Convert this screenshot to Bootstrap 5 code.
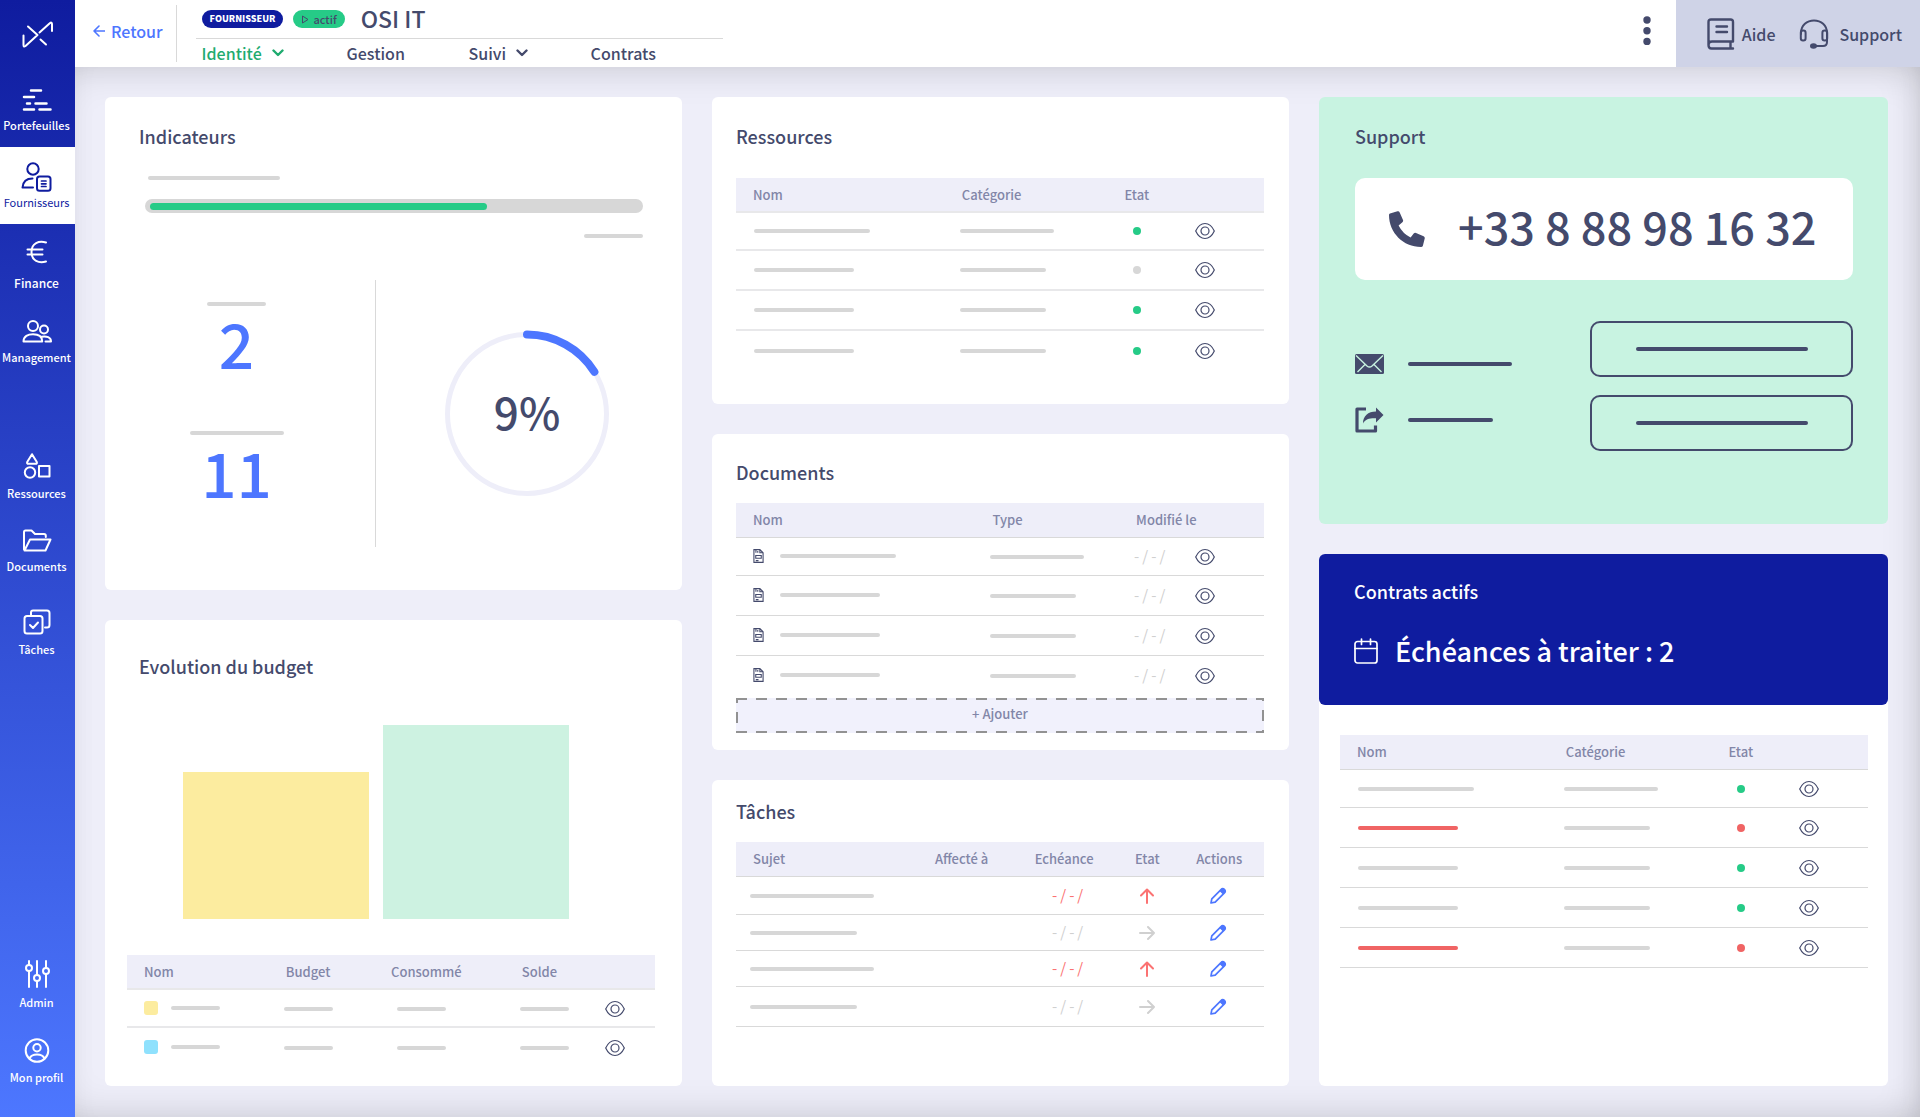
<!DOCTYPE html>
<html lang="fr">
<head>
<meta charset="utf-8">
<meta name="viewport" content="width=device-width, initial-scale=1">
<title>OSI IT – Fournisseur</title>
<link href="https://cdn.jsdelivr.net/npm/bootstrap@5.3.0/dist/css/bootstrap.min.css" rel="stylesheet">
<style>
:root{--ink:#444a6c;--muted-ink:#8286a8;--navy:#0f1c9f;--blue:#4d76ff;--ok:#26cb87;--alert:#f06464;--soft:#eeeef9;--line:#d9d9d9}
body{font-family:"Noto Sans CJK JP","Noto Sans CJK SC","Noto Sans",sans-serif;font-weight:500;color:var(--ink);background:var(--soft)}
a{text-decoration:none;color:inherit}
svg{display:block;flex:none}
.ico{fill:none;stroke:currentColor;stroke-width:2;stroke-linecap:round;stroke-linejoin:round}

/* side navigation */
.side-nav{width:75px;background:linear-gradient(#0f1c9f,#4d77ff);color:#fff;flex:none;padding-bottom:17px}
.brand{height:70px}
.side-link{height:77px;gap:6px;font-size:11px;line-height:16px;padding-right:2px}
.side-link.current{background:#fff;color:var(--navy);gap:2px;font-weight:400}
.side-link.airy{gap:11px;font-size:12px}
.side-group{margin-top:3px}
.side-group-2{margin-top:57px}

/* top bar */
.top-bar{min-height:67px;background:#fff}
.back-link{color:var(--blue);font-size:16px;line-height:24px;padding:0 13px 5px 18px;gap:6px}
.rule-v{width:1px;background:var(--line);margin:5px 0}
.head-block{width:527px;margin-left:19px}
.head-title{padding:0 6px;height:39px;gap:10px;border-bottom:1px solid var(--line)}
.head-title h1{font-size:23px;line-height:34px;margin:0 0 2px 6px;font-weight:500}
.pill{height:18px;border-radius:9px;font-size:9px;line-height:18px;padding:0 8px}
.pill-navy{background:var(--navy);color:#fff;font-weight:900}
.pill-ok{background:var(--ok);font-size:11px;gap:4px}
.tabs{height:28px;padding:0 6px;font-size:16px;line-height:28px}
.tabs a{gap:10px;width:122px}
.tabs a:first-child{width:145px;color:#1fab6f}
.kebab{border:0;background:none;color:var(--ink);padding:0 25px 5px}
.help-zone{background:#cfd3e7;padding:0 18px 0 31px;gap:24px;font-size:16px}
.help-zone a:first-child{gap:7px}
.help-zone a:last-child{gap:10px}

/* board */
.board{padding:30px 32px 31px 30px;gap:30px;box-shadow:inset 0 20px 40px -20px rgba(0,0,0,.14),inset -20px 0 40px -20px rgba(0,0,0,.14),inset 0 -20px 40px -20px rgba(0,0,0,.14)}
.board-col{flex:577 1 0;gap:30px;min-width:0}
.board-col:last-child{flex-grow:569}
.panel{background:#fff;border-radius:6px;padding:26px 25px 33px 24px}
.panel-title{font-size:18px;line-height:26px;font-weight:500;margin:0 0 29px}
.panel.dense{padding-top:25px;padding-bottom:17px}
.panel.dense .panel-title{margin-bottom:18px}
.panel.tasks{padding-top:18px}

/* placeholder lines */
.skel{display:inline-block;height:4px;border-radius:2px;background:#d7d7d7;vertical-align:middle}
.skel-alert{background:var(--alert)}
.skel-ink{background:var(--ink)}
.s-50{width:49px}.s-60{width:59px}.s-85{width:85px}.s-86{width:86px}.s-93{width:94px}.s-100{width:100px}.s-104{width:104px}.s-107{width:107px}.s-116{width:116px}.s-124{width:124px}.s-132{width:132px}.s-172{width:172px}

/* data tables */
.grid-table{width:100%;table-layout:fixed;border-collapse:separate;border-spacing:0;font-size:13px;line-height:18px}
.grid-table th{height:35px;padding:0 0 0 2px;background:var(--soft);color:var(--muted-ink);font-weight:500;border-bottom:1px solid var(--line);white-space:nowrap}
.grid-table td{height:40px;padding:0 0 2px;border-bottom:1px solid var(--line)}
.grid-table tbody tr:first-child td{height:38px}
.grid-table th:first-child{padding-left:17px}
.grid-table td:first-child{padding-left:18px}
.grid-table th.mid{text-align:center;padding:0}
.grid-table td.mid{text-align:center}
.grid-table.open tbody tr:last-child td{border-bottom:0}
.grid-table.soft-lines th,.grid-table.soft-lines td{border-bottom-width:2px;border-color:#e8e8ea}
.grid-table .see{padding-right:23px;text-align:center}
.see a,.see svg,.mid a,.mid svg{display:inline-block;vertical-align:middle}
.dot{display:inline-block;width:8px;height:8px;border-radius:50%;background:var(--ok);vertical-align:middle}
.dot-off{background:#d7d7d7}.dot-alert{background:var(--alert)}
.date-off{color:#d0d0d0;font-weight:400;font-size:15px}
.date-late{color:#fb7272;font-weight:400;font-size:15px}
.grid-table .due-cell{padding-left:7px}
.grid-table.compact td{height:36px}
.grid-table.compact td:first-child{padding-left:14px}
.grid-table.compact tbody tr:last-child td{height:40px}
.grid-table.docs td:first-child{padding-left:17px}
.doc-cell{gap:16px}
.link-pen{color:var(--blue)}
.add-btn{display:block;width:100%;height:35px;margin-top:2px;border:0;padding:0 0 3px;font-size:13px;line-height:18px;font-weight:500;color:var(--muted-ink);
 background:repeating-linear-gradient(90deg,#929292 0 11px,transparent 11px 20px) 0 0/100% 2px no-repeat,repeating-linear-gradient(90deg,#929292 0 11px,transparent 11px 20px) 0 100%/100% 2px no-repeat,repeating-linear-gradient(#929292 0 5px,transparent 5px 14px,#929292 14px 25px,transparent 25px 34px) 0 0/2px 100% no-repeat,repeating-linear-gradient(#929292 0 3px,transparent 3px 12px,#929292 12px 23px,transparent 23px 32px) 100% 0/2px 100% no-repeat,#f1f1fc}

/* indicators */
.panel.wide-left{padding-left:34px;padding-right:39px;padding-bottom:43px}
.wide-left .panel-title{margin-bottom:27px}
.lead-line{padding-left:9px}
.gauge{height:14px;border-radius:7px;background:#d7d7d7;padding:4px 5px 3px;margin:19px 0 21px 6px}
.gauge .progress-bar{background:var(--ok);border-radius:4px}
.kpis{margin-top:42px;height:267px}
.kpi-left{width:237px;border-right:1px solid var(--line);padding:22px 41px 0 0}
.kpi-num{color:var(--blue);font-size:62px;line-height:72px;margin-bottom:53px}
.kpi-ring{padding-left:34px}
.ring text{font-size:44px;fill:var(--ink)}

/* budget */
.panel.budget{padding:33px 27px 19px 22px}
.budget .panel-title{padding-left:12px}
.chart{height:194px;gap:14px;margin:46px 86px 36px 56px}
.chart-bar{flex:1}
.swatch{width:14px;height:14px;border-radius:3px}
.swatch-cell{gap:13px}
.bar-yellow{background:#fcec9f}.bar-green{background:#cdf2e1}.bar-cyan{background:#8fe1fd}
.grid-table.budget-grid td{height:38px;padding-bottom:0}
.grid-table.budget-grid td:first-child{padding-left:17px}
.budget-grid th:nth-child(3){padding-left:0}
.budget-grid td:nth-child(3){padding-left:6px}

/* support */
.panel.support{background:#c8f3e1;padding:26px 35px 73px 36px}
.phone-box{background:#fff;border-radius:10px;min-height:102px;padding:0 34px;gap:33px;font-size:45px;line-height:60px;white-space:nowrap}
.phone-box span{padding-bottom:6px}
.support-row{margin-top:41px}
.contact-list{gap:26px;padding-top:28px}
.contact-list a{gap:24px;height:30px}
.outline-btn{display:flex;align-items:center;justify-content:center;width:263px;height:56px;border:2px solid var(--ink);border-radius:10px;background:none;padding:0}
.btn-stack{gap:18px}

/* contracts */
.panel.contracts{padding:0}
.contracts-head{background:var(--navy);color:#fff;border-radius:6px;padding:24px 35px 34px}
.contracts-head .panel-title{margin-bottom:27px}
.due{font-size:27px;line-height:40px;gap:17px}
.contracts-body{padding:30px 20px 30px 21px}
</style>
</head>
<body>
<svg width="0" height="0" class="position-absolute" aria-hidden="true">
 <symbol id="eye" viewBox="0 0 20 18"><path d="M.7 9C3 4 6.300 1.500 10 1.500S17 4 19.300 9C17 14 13.700 16.500 10 16.500S3 14 .7 9z" fill="none" stroke="currentColor" stroke-width="1.200"/><circle cx="10" cy="9" r="4" fill="none" stroke="currentColor" stroke-width="1.200"/></symbol>
 <symbol id="doc" viewBox="0 0 12 16"><path d="M1 1h6.500L11 4.500V15H1zM7.500 1v3.500H11M3.200 1v3.500M5.200 2.500v2M3 7.500h6v3H3zM3 13h3" fill="none" stroke="currentColor" stroke-width="1.200"/></symbol>
 <symbol id="pen" viewBox="0 0 18 18"><path d="M2 16l.8-4.200L12 2.600a2.300 2.300 0 0 1 3.400 3.300L6.200 15.200z" fill="none" stroke="currentColor" stroke-width="1.700" stroke-linejoin="round"/><path d="M10.500 4l2-2a2.300 2.300 0 0 1 3.500 3.500l-2 2z" fill="currentColor"/></symbol>
 <symbol id="up" viewBox="0 0 16 16"><path d="M8 15V1.500M2 7.500l6-6 6 6" fill="none" stroke="currentColor" stroke-width="2" stroke-linecap="round" stroke-linejoin="round"/></symbol>
 <symbol id="right" viewBox="0 0 16 16"><path d="M1 8h14M9 2l6 6-6 6" fill="none" stroke="currentColor" stroke-width="2" stroke-linecap="round" stroke-linejoin="round"/></symbol>
 <symbol id="chev" viewBox="0 0 12 8"><path d="M1.500 1.500L6 6l4.500-4.500" fill="none" stroke="currentColor" stroke-width="2.400" stroke-linecap="round" stroke-linejoin="round"/></symbol>
</svg>
<div class="d-flex min-vh-100">
 <nav class="side-nav d-flex flex-column" aria-label="Navigation principale">
  <a href="#" class="brand d-flex align-items-center justify-content-center" aria-label="Accueil"><svg width="34" height="30" viewBox="0 0 34 30" class="ico" stroke-width="2.600"><path d="M7 6.500l9.500 8.500L4.500 26q-2 1.500-2-1V15.500M18.500 12.500L28.500 3.500q2.500-2 2.500.5V11M19.500 19.500L25 24.500"/></svg></a>
  <a href="#" class="side-link pt-1 d-flex flex-column align-items-center justify-content-center"><svg width="30" height="22" viewBox="0 0 30 22" class="ico"><path stroke-width="2.500" d="M9 1.500h10M2 8h10M5 14.500h3M13.500 14.500h11M2 20.500h10M17.500 20.500h11"/></svg><span>Portefeuilles</span></a>
  <a href="#" aria-current="page" class="side-link current d-flex flex-column align-items-center justify-content-center"><svg width="31" height="30" viewBox="0 0 31 30" class="ico"><circle cx="12" cy="7" r="5.700"/><path d="M11.500 16.500C6 16.500 2 19.500 1.500 25.500H12"/><rect x="16" y="14.500" width="13.500" height="14.300" rx="2.500"/><path d="M20.500 19h4.500M20.500 21.800h4.500M20.500 24.500h4.500" stroke-width="1.700"/></svg><span>Fournisseurs</span></a>
  <div class="side-group">
   <a href="#" class="side-link airy d-flex flex-column align-items-center justify-content-center"><svg width="22" height="24" viewBox="0 0 22 24" class="ico"><path d="M20 2.500C13 .5 5.500 3 5.500 12S13 23.500 20 21.500M1.500 9.500h15M1.500 14.500h15"/></svg><span>Finance</span></a>
   <a href="#" class="side-link d-flex flex-column align-items-center justify-content-center"><svg width="30" height="23" viewBox="0 0 30 23" class="ico"><circle cx="11" cy="6" r="5"/><circle cx="22" cy="9.500" r="4"/><path d="M1.500 21.500C1.500 16 6 14.200 11 14.200s9.200 1.800 9.200 7.300zM19.500 16.800c5 -1 9.500.500 9.500 4.700h-5.500"/></svg><span>Management</span></a>
  </div>
  <div class="side-group-2">
   <a href="#" class="side-link d-flex flex-column align-items-center justify-content-center"><svg width="28" height="26" viewBox="0 0 28 26" class="ico"><path d="M9 1.200L13.800 9q.5 1.800-1.300 1.800h-7q-1.800 0-1.300-1.800z"/><circle cx="7" cy="19.500" r="5.200"/><path d="M16 13h10.500v10.500H16z"/></svg><span>Ressources</span></a>
   <a href="#" class="side-link pb-1 d-flex flex-column align-items-center justify-content-center"><svg width="30" height="23" viewBox="0 0 30 23" class="ico"><path d="M2 20.500V3q0-1.500 1.500-1.500h6L13 5h9q1.800 0 1.800 1.800V8M2.500 21.500L8 10.500h20.500L23.500 21.500z"/></svg><span>Documents</span></a>
   <a href="#" class="side-link pt-1 d-flex flex-column align-items-center justify-content-center"><svg width="28" height="26" viewBox="0 0 28 26" class="ico"><path d="M8 6V3.500q0-2 2-2h14q2.500 0 2.500 2.500v12q0 2.500-2.500 2.500h-2"/><rect x="1.500" y="7" width="18" height="17.500" rx="2.500"/><path d="M7 16l3 3 5-5.500"/></svg><span>Tâches</span></a>
  </div>
  <div class="mt-auto">
   <a href="#" class="side-link d-flex flex-column align-items-center justify-content-center"><svg width="28" height="28" viewBox="0 0 28 28" class="ico"><path d="M6 1v4M6 11v16M14 1v14M14 21v6M23 1v7M23 14v13"/><circle cx="6" cy="8" r="3"/><circle cx="14" cy="18" r="3"/><circle cx="23" cy="11" r="3"/></svg><span>Admin</span></a>
   <a href="#" class="side-link d-flex flex-column align-items-center justify-content-center"><svg width="26" height="25" viewBox="0 0 26 25" class="ico"><circle cx="13" cy="12.500" r="11.300"/><circle cx="13" cy="9.800" r="3.700"/><path d="M5.500 20.500C7 17 10 16.500 13 16.500s6 .5 7.500 4"/></svg><span>Mon profil</span></a>
  </div>
 </nav>

 <div class="flex-grow-1 d-flex flex-column">
  <header class="top-bar d-flex">
   <a href="#" class="back-link d-flex align-items-center"><svg width="12" height="12" viewBox="0 0 12 12" class="ico"><path stroke-width="1.600" d="M11.500 6H1M6 1L1 6l5 5"/></svg><span>Retour</span></a>
   <div class="rule-v"></div>
   <div class="head-block">
    <div class="head-title d-flex align-items-center">
     <span class="pill pill-navy">FOURNISSEUR</span>
     <span class="pill pill-ok d-flex align-items-center"><svg width="8" height="9" viewBox="0 0 8 9" fill="none" stroke="currentColor"><path d="M1.500 1l5.500 3.500L1.500 8z"/></svg>actif</span>
     <h1>OSI IT</h1>
    </div>
    <nav class="tabs d-flex" aria-label="Sections">
     <a href="#" class="d-flex align-items-center">Identité<svg width="12" height="8"><use href="#chev"/></svg></a>
     <a href="#">Gestion</a>
     <a href="#" class="d-flex align-items-center">Suivi<svg width="12" height="8"><use href="#chev"/></svg></a>
     <a href="#">Contrats</a>
    </nav>
   </div>
   <button class="kebab ms-auto" type="button" aria-label="Plus d'actions"><svg width="8" height="30" viewBox="0 0 8 30" fill="currentColor"><circle cx="4" cy="4" r="3.700"/><circle cx="4" cy="14.700" r="3.700"/><circle cx="4" cy="25.400" r="3.700"/></svg></button>
   <div class="help-zone d-flex align-items-center">
    <a href="#" class="d-flex align-items-center"><svg width="28" height="32" viewBox="0 0 28 32" class="ico"><path stroke-width="2.400" d="M26 23.500V4q0-2.500-2.500-2.500H4Q1.500 1.500 1.500 4v23q0 3.500 3 3.500H26M26 23.500H5q-3.500 0-3.500 3.500M23.500 23.500v7M9.500 8.500H20M9.500 14H20"/></svg>Aide</a>
    <a href="#" class="d-flex align-items-center"><svg width="30" height="30" viewBox="0 0 30 30" class="ico"><path d="M2 15v-1C2 6 8 1.500 15 1.500S28 6 28 14v9q0 4-4 4h-9"/><rect x="1.800" y="11.500" width="4.800" height="10" rx="2.200"/><rect x="23.400" y="11.500" width="4.800" height="10" rx="2.200"/><ellipse cx="14.500" cy="27" rx="2.500" ry="1.800" fill="currentColor"/></svg>Support</a>
   </div>
  </header>

  <main class="board d-flex flex-grow-1">
   <div class="board-col d-flex flex-column">
    <section class="panel wide-left">
     <h2 class="panel-title">Indicateurs</h2>
     <div class="lead-line d-flex"><span class="skel s-132"></span></div>
     <div class="gauge progress" role="progressbar" aria-label="Avancement" aria-valuenow="69" aria-valuemin="0" aria-valuemax="100"><div class="progress-bar" style="width:69%"></div></div>
     <div class="d-flex justify-content-end"><span class="skel s-60"></span></div>
     <div class="kpis d-flex">
      <div class="kpi-left d-flex flex-column align-items-center">
       <span class="skel s-60"></span><div class="kpi-num">2</div>
       <span class="skel s-93"></span><div class="kpi-num mb-0">11</div>
      </div>
      <div class="kpi-ring flex-grow-1 d-flex align-items-center justify-content-center">
       <svg class="ring" width="168" height="168" viewBox="0 0 168 168" role="img" aria-label="9 %"><circle cx="84" cy="84" r="79.500" fill="none" stroke="#eeeef9" stroke-width="5"/><path d="M84 4.500A79.500 79.500 0 0 1 151.400 41.800" fill="none" stroke="#4d76ff" stroke-width="8" stroke-linecap="round"/><text x="84" y="100" text-anchor="middle">9%</text></svg>
      </div>
     </div>
    </section>
    <section class="panel budget flex-grow-1">
     <h2 class="panel-title">Evolution du budget</h2>
     <div class="chart d-flex align-items-end">
      <div class="chart-bar bar-yellow" style="height:76%"></div>
      <div class="chart-bar bar-green" style="height:100%"></div>
     </div>
     <table class="grid-table soft-lines open budget-grid">
      <colgroup><col style="width:29.700%"><col style="width:20.300%"><col style="width:24.400%"><col><col style="width:15%"></colgroup>
      <thead><tr><th>Nom</th><th>Budget</th><th>Consommé</th><th>Solde</th><th></th></tr></thead>
      <tbody>
       <tr><td><div class="swatch-cell d-flex align-items-center"><span class="swatch bar-yellow"></span><span class="skel s-50"></span></div></td><td><span class="skel s-50"></span></td><td><span class="skel s-50"></span></td><td><span class="skel s-50"></span></td><td class="mid"><a href="#" aria-label="Voir"><svg width="20" height="18"><use href="#eye"/></svg></a></td></tr>
       <tr><td><div class="swatch-cell d-flex align-items-center"><span class="swatch bar-cyan"></span><span class="skel s-50"></span></div></td><td><span class="skel s-50"></span></td><td><span class="skel s-50"></span></td><td><span class="skel s-50"></span></td><td class="mid"><a href="#" aria-label="Voir"><svg width="20" height="18"><use href="#eye"/></svg></a></td></tr>
      </tbody>
     </table>
    </section>
   </div>

   <div class="board-col d-flex flex-column">
    <section class="panel">
     <h2 class="panel-title">Ressources</h2>
     <table class="grid-table soft-lines open">
      <colgroup><col style="width:42.400%"><col style="width:27.500%"><col style="width:12%"><col></colgroup>
      <thead><tr><th>Nom</th><th>Catégorie</th><th class="mid">Etat</th><th></th></tr></thead>
      <tbody>
       <tr><td><span class="skel s-116"></span></td><td><span class="skel s-93"></span></td><td class="mid"><span class="dot"></span></td><td class="see"><a href="#" aria-label="Voir"><svg width="20" height="18"><use href="#eye"/></svg></a></td></tr>
       <tr><td><span class="skel s-100"></span></td><td><span class="skel s-86"></span></td><td class="mid"><span class="dot dot-off"></span></td><td class="see"><a href="#" aria-label="Voir"><svg width="20" height="18"><use href="#eye"/></svg></a></td></tr>
       <tr><td><span class="skel s-100"></span></td><td><span class="skel s-86"></span></td><td class="mid"><span class="dot"></span></td><td class="see"><a href="#" aria-label="Voir"><svg width="20" height="18"><use href="#eye"/></svg></a></td></tr>
       <tr><td><span class="skel s-100"></span></td><td><span class="skel s-86"></span></td><td class="mid"><span class="dot"></span></td><td class="see"><a href="#" aria-label="Voir"><svg width="20" height="18"><use href="#eye"/></svg></a></td></tr>
      </tbody>
     </table>
    </section>
    <section class="panel dense">
     <h2 class="panel-title">Documents</h2>
     <table class="grid-table open docs">
      <colgroup><col style="width:48.200%"><col style="width:27.200%"><col style="width:6.500%"><col></colgroup>
      <thead><tr><th>Nom</th><th>Type</th><th colspan="2">Modifié le</th></tr></thead>
      <tbody>
       <tr><td><div class="doc-cell d-flex align-items-center"><svg width="11" height="16"><use href="#doc"/></svg><span class="skel s-116"></span></div></td><td><span class="skel s-93"></span></td><td class="date-off">-&thinsp;/&thinsp;-&thinsp;/</td><td class="see"><a href="#" aria-label="Voir"><svg width="20" height="18"><use href="#eye"/></svg></a></td></tr>
       <tr><td><div class="doc-cell d-flex align-items-center"><svg width="11" height="16"><use href="#doc"/></svg><span class="skel s-100"></span></div></td><td><span class="skel s-86"></span></td><td class="date-off">-&thinsp;/&thinsp;-&thinsp;/</td><td class="see"><a href="#" aria-label="Voir"><svg width="20" height="18"><use href="#eye"/></svg></a></td></tr>
       <tr><td><div class="doc-cell d-flex align-items-center"><svg width="11" height="16"><use href="#doc"/></svg><span class="skel s-100"></span></div></td><td><span class="skel s-86"></span></td><td class="date-off">-&thinsp;/&thinsp;-&thinsp;/</td><td class="see"><a href="#" aria-label="Voir"><svg width="20" height="18"><use href="#eye"/></svg></a></td></tr>
       <tr><td><div class="doc-cell d-flex align-items-center"><svg width="11" height="16"><use href="#doc"/></svg><span class="skel s-100"></span></div></td><td><span class="skel s-86"></span></td><td class="date-off">-&thinsp;/&thinsp;-&thinsp;/</td><td class="see"><a href="#" aria-label="Voir"><svg width="20" height="18"><use href="#eye"/></svg></a></td></tr>
      </tbody>
     </table>
     <button type="button" class="add-btn">+ Ajouter</button>
    </section>
    <section class="panel dense tasks flex-grow-1">
     <h2 class="panel-title">Tâches</h2>
     <table class="grid-table compact">
      <colgroup><col style="width:37.300%"><col style="width:18%"><col style="width:13.700%"><col style="width:17.800%"><col></colgroup>
      <thead><tr><th>Sujet</th><th>Affecté à</th><th class="mid">Echéance</th><th class="mid">Etat</th><th class="see">Actions</th></tr></thead>
      <tbody>
       <tr><td><span class="skel s-124"></span></td><td></td><td class="mid due-cell date-late">-&thinsp;/&thinsp;-&thinsp;/</td><td class="mid date-late"><svg width="16" height="16"><use href="#up"/></svg></td><td class="see"><a href="#" aria-label="Modifier" class="link-pen"><svg width="18" height="18"><use href="#pen"/></svg></a></td></tr>
       <tr><td><span class="skel s-107"></span></td><td></td><td class="mid due-cell date-off">-&thinsp;/&thinsp;-&thinsp;/</td><td class="mid date-off"><svg width="16" height="16"><use href="#right"/></svg></td><td class="see"><a href="#" aria-label="Modifier" class="link-pen"><svg width="18" height="18"><use href="#pen"/></svg></a></td></tr>
       <tr><td><span class="skel s-124"></span></td><td></td><td class="mid due-cell date-late">-&thinsp;/&thinsp;-&thinsp;/</td><td class="mid date-late"><svg width="16" height="16"><use href="#up"/></svg></td><td class="see"><a href="#" aria-label="Modifier" class="link-pen"><svg width="18" height="18"><use href="#pen"/></svg></a></td></tr>
       <tr><td><span class="skel s-107"></span></td><td></td><td class="mid due-cell date-off">-&thinsp;/&thinsp;-&thinsp;/</td><td class="mid date-off"><svg width="16" height="16"><use href="#right"/></svg></td><td class="see"><a href="#" aria-label="Modifier" class="link-pen"><svg width="18" height="18"><use href="#pen"/></svg></a></td></tr>
      </tbody>
     </table>
    </section>
   </div>

   <div class="board-col d-flex flex-column">
    <section class="panel support">
     <h2 class="panel-title">Support</h2>
     <a href="tel:+33888981632" class="phone-box d-flex align-items-center"><svg width="36" height="36" viewBox="0 0 36 36" fill="currentColor"><path d="M1 2.500L8.500.3q1.500-.4 2.200 1.100L14 9q.5 1.300-.6 2.300L9.600 14.400Q13.600 22.400 21.600 26.400L24.700 22.600q1-1.100 2.300-.6L34.600 25.300q1.500.7 1.100 2.200L33.900 34.700q-.4 1.300-1.900 1.300C14.300 36 0 21.700 0 4q0-1.200 1-1.500z"/></svg><span>+33 8 88 98 16 32</span></a>
     <div class="support-row d-flex justify-content-between">
      <div class="contact-list d-flex flex-column">
       <a href="#" class="d-flex align-items-center" aria-label="Envoyer un e-mail"><svg width="29" height="20" viewBox="0 0 29 20"><rect width="29" height="20" rx="1.500" fill="currentColor"/><path d="M1 1.500L12 12q2.500 2.200 5 0L28 1.500M2.500 18l7.500-7.500M26.500 18L19 10.500" fill="none" stroke="#c8f3e1" stroke-width="1.400"/></svg><span class="skel skel-ink s-104"></span></a>
       <a href="#" class="d-flex align-items-center" aria-label="Partager"><svg width="29" height="26" viewBox="0 0 29 26"><path d="M11 2H2v22h18.500v-5.500" fill="none" stroke="currentColor" stroke-width="3.200" stroke-linejoin="round"/><path d="M21 .5L28.500 8 21 15.500V11.300C15 11 10.500 12 8 16.500 8 9 13 4.500 21 4.500z" fill="currentColor"/></svg><span class="skel skel-ink s-85"></span></a>
      </div>
      <div class="btn-stack d-flex flex-column">
       <button type="button" class="outline-btn" aria-label="Action 1"><span class="skel skel-ink s-172"></span></button>
       <button type="button" class="outline-btn" aria-label="Action 2"><span class="skel skel-ink s-172"></span></button>
      </div>
     </div>
    </section>
    <section class="panel contracts flex-grow-1">
     <div class="contracts-head">
      <h2 class="panel-title">Contrats actifs</h2>
      <div class="due d-flex align-items-center"><svg width="24" height="26" viewBox="0 0 24 26" class="ico"><g stroke-width="1.700"><rect x="1" y="3.500" width="22" height="21.500" rx="2.500"/><path d="M1 10.500h22M7.500 1v5.500M16.500 1v5.500"/></g></svg><span>Échéances à traiter : 2</span></div>
     </div>
     <div class="contracts-body">
      <table class="grid-table">
       <colgroup><col style="width:42.400%"><col style="width:27.500%"><col style="width:12%"><col></colgroup>
       <thead><tr><th>Nom</th><th>Catégorie</th><th class="mid">Etat</th><th></th></tr></thead>
       <tbody>
        <tr><td><span class="skel s-116"></span></td><td><span class="skel s-93"></span></td><td class="mid"><span class="dot"></span></td><td class="see"><a href="#" aria-label="Voir"><svg width="20" height="18"><use href="#eye"/></svg></a></td></tr>
        <tr><td><span class="skel skel-alert s-100"></span></td><td><span class="skel s-86"></span></td><td class="mid"><span class="dot dot-alert"></span></td><td class="see"><a href="#" aria-label="Voir"><svg width="20" height="18"><use href="#eye"/></svg></a></td></tr>
        <tr><td><span class="skel s-100"></span></td><td><span class="skel s-86"></span></td><td class="mid"><span class="dot"></span></td><td class="see"><a href="#" aria-label="Voir"><svg width="20" height="18"><use href="#eye"/></svg></a></td></tr>
        <tr><td><span class="skel s-100"></span></td><td><span class="skel s-86"></span></td><td class="mid"><span class="dot"></span></td><td class="see"><a href="#" aria-label="Voir"><svg width="20" height="18"><use href="#eye"/></svg></a></td></tr>
        <tr><td><span class="skel skel-alert s-100"></span></td><td><span class="skel s-86"></span></td><td class="mid"><span class="dot dot-alert"></span></td><td class="see"><a href="#" aria-label="Voir"><svg width="20" height="18"><use href="#eye"/></svg></a></td></tr>
       </tbody>
      </table>
     </div>
    </section>
   </div>
  </main>
 </div>
</div>
<script src="https://cdn.jsdelivr.net/npm/bootstrap@5.3.0/dist/js/bootstrap.bundle.min.js"></script>
</body>
</html>
